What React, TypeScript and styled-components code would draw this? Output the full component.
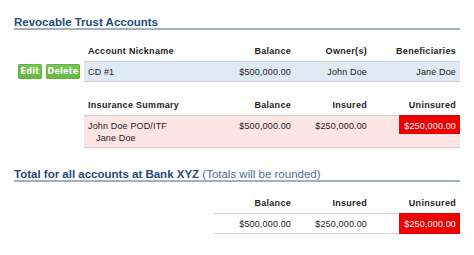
import React from "react";
import styled, { createGlobalStyle } from "styled-components";

const Global = createGlobalStyle`
  html, body { margin: 0; padding: 0; background: #ffffff; }
  body { font-family: "Liberation Sans", Arial, sans-serif; color: #222; }
`;

const Page = styled.div`
  width: 446px;
  padding-left: 14px;
`;

const SectionTitle = styled.div<{ $top: number }>`
  margin-top: ${(p) => p.$top}px;
  font-size: 11.5px;
  line-height: 12px;
  font-weight: bold;
  color: #234a80;
  border-bottom: 2px solid #9fb0c2;
  white-space: nowrap;
`;

const Note = styled.span`
  font-weight: normal;
  color: #4d6d96;
`;

const Table = styled.div<{ $cols: string; $top: number; $left?: number }>`
  display: grid;
  grid-template-columns: ${(p) => p.$cols};
  margin-top: ${(p) => p.$top}px;
  margin-left: ${(p) => p.$left ?? 0}px;
`;

const HeadCell = styled.div<{ $align?: "left" | "right" }>`
  padding: 0 4px 4px;
  font-size: 9px;
  line-height: 11px;
  font-weight: bold;
  letter-spacing: 0.3px;
  color: #1e1e1e;
  text-align: ${(p) => p.$align ?? "right"};
  white-space: nowrap;
`;

const tones = {
  blue: { bg: "#e0eaf5", line: "#c7d2de" },
  pink: { bg: "#fde5e5", line: "#d8cccc" },
  plain: { bg: "transparent", line: "#d4d4d4" },
};

const Cell = styled.div<{
  $tone: keyof typeof tones;
  $align?: "left" | "right";
}>`
  background: ${(p) => tones[p.$tone].bg};
  border-top: 1px solid ${(p) => tones[p.$tone].line};
  border-bottom: 1px solid ${(p) => tones[p.$tone].line};
  padding: 4px 4px 3px;
  font-size: 9px;
  line-height: 12px;
  letter-spacing: 0.15px;
  color: #222;
  text-align: ${(p) => p.$align ?? "right"};
  white-space: nowrap;
`;

const FlagCell = styled.div<{ $tone: keyof typeof tones; $fill?: boolean }>`
  display: flex;
  justify-content: flex-end;
  align-items: ${(p) => (p.$fill ? "stretch" : "flex-start")};
  background: ${(p) => tones[p.$tone].bg};
  border-top: 1px solid ${(p) => tones[p.$tone].line};
  border-bottom: 1px solid ${(p) => tones[p.$tone].line};
`;

const RedAmount = styled.div<{ $fill?: boolean }>`
  background: #ec0000;
  color: #ffffff;
  font-size: 9px;
  line-height: 12px;
  letter-spacing: 0.15px;
  margin-top: -1px;
  margin-bottom: ${(p) => (p.$fill ? "-1px" : "0")};
  padding: ${(p) => (p.$fill ? "5px 4px 3px 5px" : "5px 4px 2px 5px")};
  white-space: nowrap;
`;

const Indent = styled.div`
  padding-left: 8px;
`;

const Actions = styled.div`
  display: flex;
  align-items: center;
  gap: 4px;
  padding-left: 4px;
`;

const GreenButton = styled.button<{ $w: number }>`
  width: ${(p) => p.$w}px;
  height: 15px;
  padding: 0;
  border: 1px solid #63b243;
  border-radius: 1px;
  background: linear-gradient(#79c556, #66b845);
  color: #ffffff;
  font-family: "Liberation Sans Narrow", "DejaVu Sans Condensed", "Liberation Sans", sans-serif;
  font-size: 9px;
  font-weight: bold;
  line-height: 13px;
  letter-spacing: 0.2px;
  cursor: pointer;
`;

const Empty = styled.div``;

const COLS_MAIN = "70px 131px 80px 76px 89px";
const COLS_TOTAL = "82px 76px 89px";

export default function App() {
  return (
    <>
      <Global />
      <Page>
        <SectionTitle $top={16}>Revocable Trust Accounts</SectionTitle>

        <Table $cols={COLS_MAIN} $top={16}>
          <Empty />
          <HeadCell $align="left">Account Nickname</HeadCell>
          <HeadCell>Balance</HeadCell>
          <HeadCell>Owner(s)</HeadCell>
          <HeadCell>Beneficiaries</HeadCell>

          <Actions>
            <GreenButton $w={24}>Edit</GreenButton>
            <GreenButton $w={34}>Delete</GreenButton>
          </Actions>
          <Cell $tone="blue" $align="left">CD #1</Cell>
          <Cell $tone="blue">$500,000.00</Cell>
          <Cell $tone="blue">John Doe</Cell>
          <Cell $tone="blue">Jane Doe</Cell>
        </Table>

        <Table $cols={COLS_MAIN} $top={18}>
          <Empty />
          <HeadCell $align="left">Insurance Summary</HeadCell>
          <HeadCell>Balance</HeadCell>
          <HeadCell>Insured</HeadCell>
          <HeadCell>Uninsured</HeadCell>

          <Empty />
          <Cell $tone="pink" $align="left">
            John Doe POD/ITF
            <Indent>Jane Doe</Indent>
          </Cell>
          <Cell $tone="pink">$500,000.00</Cell>
          <Cell $tone="pink">$250,000.00</Cell>
          <FlagCell $tone="pink">
            <RedAmount>$250,000.00</RedAmount>
          </FlagCell>
        </Table>

        <SectionTitle $top={20}>
          Total for all accounts at Bank XYZ <Note>(Totals will be rounded)</Note>
        </SectionTitle>

        <Table $cols={COLS_TOTAL} $top={16} $left={199}>
          <HeadCell>Balance</HeadCell>
          <HeadCell>Insured</HeadCell>
          <HeadCell>Uninsured</HeadCell>

          <Cell $tone="plain">$500,000.00</Cell>
          <Cell $tone="plain">$250,000.00</Cell>
          <FlagCell $tone="plain" $fill>
            <RedAmount $fill>$250,000.00</RedAmount>
          </FlagCell>
        </Table>
      </Page>
    </>
  );
}
